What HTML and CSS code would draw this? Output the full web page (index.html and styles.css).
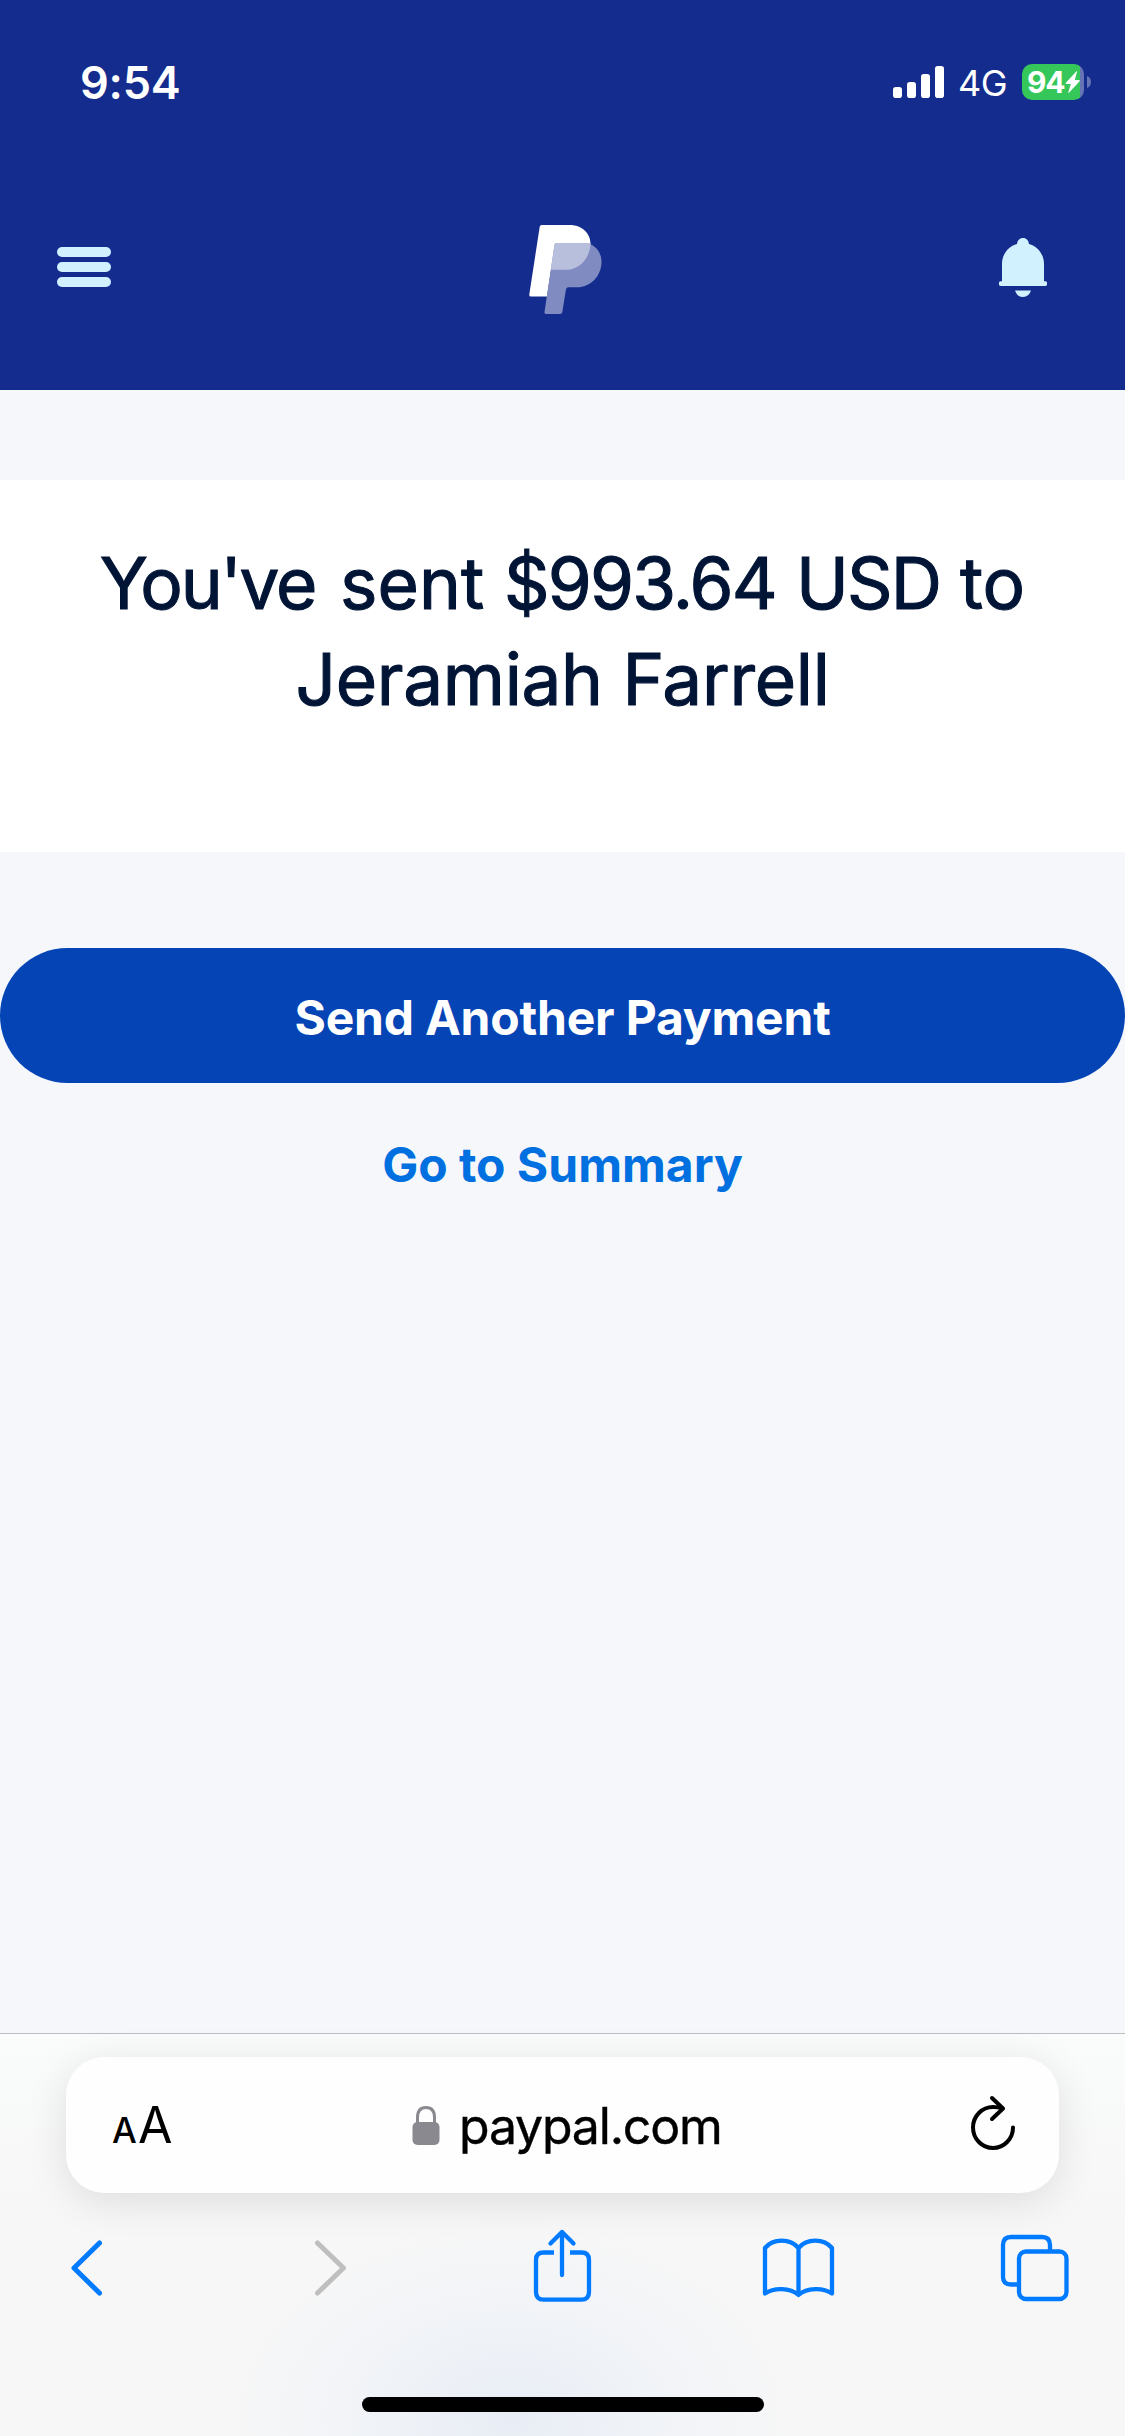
FILE: index.html
```html
<!DOCTYPE html>
<html lang="en">
<head>
<meta charset="utf-8">
<title>PayPal</title>
<link rel="stylesheet" href="styles.css">
</head>
<body>
<div class="screen">
  <div class="top">
    <div class="status">
      <span class="time">9:54</span>
      <div class="status-right">
        <svg class="signal" width="51" height="32" viewBox="0 0 51 32" fill="#fff"><rect y="21" width="9" height="11" rx="2.8"/><rect x="14" y="16" width="9" height="16" rx="2.8"/><rect x="28" y="8" width="9" height="24" rx="2.8"/><rect x="42" width="9" height="32" rx="2.8"/></svg>
        <span class="network">4G</span>
        <div class="battery">
          <span class="level">94</span>
          <svg width="15" height="22" viewBox="0 0 15 22"><path d="M11.5.3 Q12.3-.2 12 1 L9.8 9 H14 Q15.4 9 14.6 10.2 L4.2 21.6 Q3 22.4 3.4 21 L5.8 13 H1.2 Q0 12.9.8 11.7Z" fill="#fff"/></svg>
        </div>
        <svg class="battery-tip" width="4" height="12" viewBox="0 0 4 12"><path d="M0 0 Q4 1.6 4 6 T0 12Z" fill="#6674b5"/></svg>
      </div>
    </div>
    <header class="nav">
      <svg width="54" height="40" viewBox="0 0 54 40" fill="#d2f1ff"><rect y="0" width="54" height="10" rx="5"/><rect y="15" width="54" height="10" rx="5"/><rect y="30" width="54" height="10" rx="5"/></svg>
      <svg class="logo" width="74" height="90" viewBox="0 0 74 90">
        <path d="M12.7 0 H41 C53 0 61.5 8.5 61.5 18.5 C61.5 32 51 44.7 38 44.7 H22 L18 71.5 H2 Q0 71.5.3 69.5 L10.7 1.8 Q11 0 12.7 0Z" fill="#fff"/>
        <path d="M27.5 18 H54 C65.5 18 72.5 26.5 72.5 37 C72.5 51 61.5 62.3 48 62.3 H39.5 Q37.3 62.3 37 64.3 L33.3 87 Q33 89 31 89 H17.5 Q15.2 89 15.5 87 L25.5 20 Q25.8 18 27.5 18Z" fill="#808cc1"/>
        <path d="M27.5 18 H61.5 C61.5 32 51 44.7 38 44.7 H23.5 Q21.7 44.7 22 43 L25.5 20 Q25.8 18 27.5 18Z" fill="#b8bfdc"/>
      </svg>
      <svg width="48" height="59" viewBox="0 0 48 59" fill="#d2f1ff"><path d="M18 6 C18.5 2.5 20.5 0 24 0 S29.5 2.5 30 6 C39 8.5 45 16.5 45 26 V43.3 H46 A2.3 2.3 0 0 1 46 48 H2 A2.3 2.3 0 0 1 2 43.3 H3 V26 C3 16.5 9 8.5 18 6Z"/><path d="M16 52.5 H32 Q30 59 24 59 T16 52.5Z"/></svg>
    </header>
  </div>
  <main class="content">
    <section class="panel"><h1><span class="lead">You've</span> sent <span class="amount">$993.64</span> <span class="currency">USD</span> to<br><span class="recipient">Jeramiah Farrell</span></h1></section>
    <button class="primary">Send Another Payment</button>
    <a class="link">Go to Summary</a>
  </main>
  <footer class="browser">
    <div class="address">
      <div class="reader"><span class="small-a">A</span><span class="large-a">A</span></div>
      <div class="site">
        <svg width="28" height="39" viewBox="0 0 28 39"><path d="M5.5 18 V11.5 Q5.5 1.5 14 1.5 T22.5 11.5 V18" fill="none" stroke="#8a8990" stroke-width="3"/><rect x=".5" y="16" width="27" height="23" rx="5" fill="#8a8990"/></svg>
        <span class="domain">paypal.com</span>
      </div>
      <svg class="reload" width="46" height="56" viewBox="0 0 46 56" fill="none" stroke="#000" stroke-width="4" stroke-linecap="round" stroke-linejoin="round"><path d="M43 32.5 A20 20.5 0 1 1 23 12 Q28 12 32.5 13.5"/><path d="M22 3 L33 13.5 L22 24"/></svg>
    </div>
    <nav class="toolbar">
      <svg class="chevron" width="80" height="80" viewBox="0 0 80 80"><path d="M52.5 17 L27 42 L52.5 67"/></svg>
      <svg class="chevron disabled" width="80" height="80" viewBox="0 0 80 80"><path d="M34.5 17 L60.5 42 L34.5 67"/></svg>
      <svg width="80" height="80" viewBox="0 0 80 80"><path d="M35 26.5 H24.5 Q17 26.5 17 34 V66 Q17 73.7 24.5 73.7 H62.5 Q70 73.7 70 66 V34 Q70 26.5 62.5 26.5 H51" stroke-linecap="butt"/><path d="M43 49 V6 M31.5 17.5 L43 6 L54.5 17.5"/></svg>
      <svg width="80" height="80" viewBox="0 0 80 80"><path d="M10 22 C18 12.500 35 12 43.500 22 C52 12 69 12.500 77 22 V67.500 C68 61.500 52 61.500 43.500 69 C35 61.500 19 61.500 10 67.500Z M43.500 22 V68"/></svg>
      <svg width="80" height="80" viewBox="0 0 80 80"><path d="M27.5 58.5 H20 Q12 58.5 12 51 V19 Q12 11 20 11 H51 Q59 11 59 19 V25" stroke-linecap="butt"/><rect x="28" y="25.5" width="47.5" height="47.5" rx="7"/></svg>
    </nav>
    <div class="home"></div>
  </footer>
</div>
</body>
</html>
```
FILE: styles.css
```css
* { box-sizing: border-box; }
body { margin: 0; font-family: Inter, "Liberation Sans", sans-serif; }
svg { display: block; flex: none; }
.screen { width: 1125px; height: 2436px; display: flex; flex-direction: column; overflow: hidden; background: #f5f7fb; }
.top { height: 390px; background: #142c8e; color: #fff; flex: none; }
.status { height: 164px; display: flex; justify-content: space-between; padding: 0 34px 0 80px; align-items: center; }
.time { font-size: 45px; font-weight: 600; line-height: 54px; letter-spacing: -0.2px; margin-top: 1px; }
.status-right { display: flex; align-items: center; }
.network { font-size: 36px; line-height: 44px; margin-left: 14px; width: 49px; margin-top: 2px; letter-spacing: -0.5px; }
.battery { width: 62px; height: 36px; border-radius: 10px; background: linear-gradient(90deg, #35c759 58px, #6674b5 58px); margin-left: 15px; display: flex; align-items: center; padding-left: 5px; }
.level { font-size: 30px; line-height: 36px; font-weight: 700; width: 38px; letter-spacing: -1.2px; }
.battery-tip { margin-left: 3px; }
.nav { display: flex; justify-content: space-between; padding: 0 78px 0 57px; height: 206px; align-items: center; }
.logo { margin-left: 22px; margin-top: 5px; }
.content { flex: 1; display: flex; flex-direction: column; align-items: center; padding-top: 90px; }
.panel { width: 100%; height: 372px; background: #fff; padding-top: 55px; text-align: center; color: #001435; }
h1 { margin: 0; font-size: 71px; line-height: 96px; font-weight: 400; -webkit-text-stroke: 1.1px #001435; white-space: nowrap; }
.lead { letter-spacing: -2.2px; margin-right: 5px; }
.amount { letter-spacing: -1.8px; }
.currency { letter-spacing: -1.8px; }
.recipient { letter-spacing: -0.3px; }
.primary { margin-top: 96px; width: 100%; height: 135px; border: 0; border-radius: 68px; background: #0544b5; color: #fff; font: 700 48px/58px Inter, sans-serif; letter-spacing: -0.2px; padding: 4px 0 0; }
.link { margin-top: 53px; color: #0070e0; font-weight: 700; font-size: 48px; line-height: 58px; }
.browser { height: 403px; flex: none; border-top: 1px solid #bcbdc2; background: radial-gradient(ellipse 290px 200px at 510px 385px, #e8edf5, rgba(240,243,248,.7) 60%, rgba(247,247,247,0) 100%), linear-gradient(#fafbfb, #f7f7f7 45%); display: flex; flex-direction: column; align-items: center; padding-top: 23px; }
.address { width: 993px; height: 136px; flex: none; border-radius: 38px; background: #fefefe; box-shadow: 0 8px 42px rgba(0,0,0,.11); display: flex; align-items: center; padding: 0 43px 0 46px; color: #000; }
.reader { display: flex; align-items: baseline; width: 64px; line-height: 60px; margin-top: 5px; }
.small-a { font-size: 35px; width: 26px; font-weight: 500; }
.large-a { font-size: 50px; }
.site { display: flex; align-items: center; gap: 19px; margin-left: 236px; margin-top: 1px; }
.domain { font-size: 50px; line-height: 60px; letter-spacing: -1.2px; -webkit-text-stroke: 0.4px #000; }
.reload { margin: -5px 0 0 auto; }
.toolbar { display: flex; justify-content: space-between; width: 100%; padding: 33px 54px 0 47px; }
.toolbar svg { fill: none; stroke: #007aff; stroke-width: 4.3px; stroke-linecap: round; stroke-linejoin: round; }
.toolbar .chevron { stroke-width: 5px; }
.toolbar .disabled { stroke: #bfbfbf; }
.home { width: 402px; height: 15px; border-radius: 8px; background: #000; margin-top: 91px; }
```
